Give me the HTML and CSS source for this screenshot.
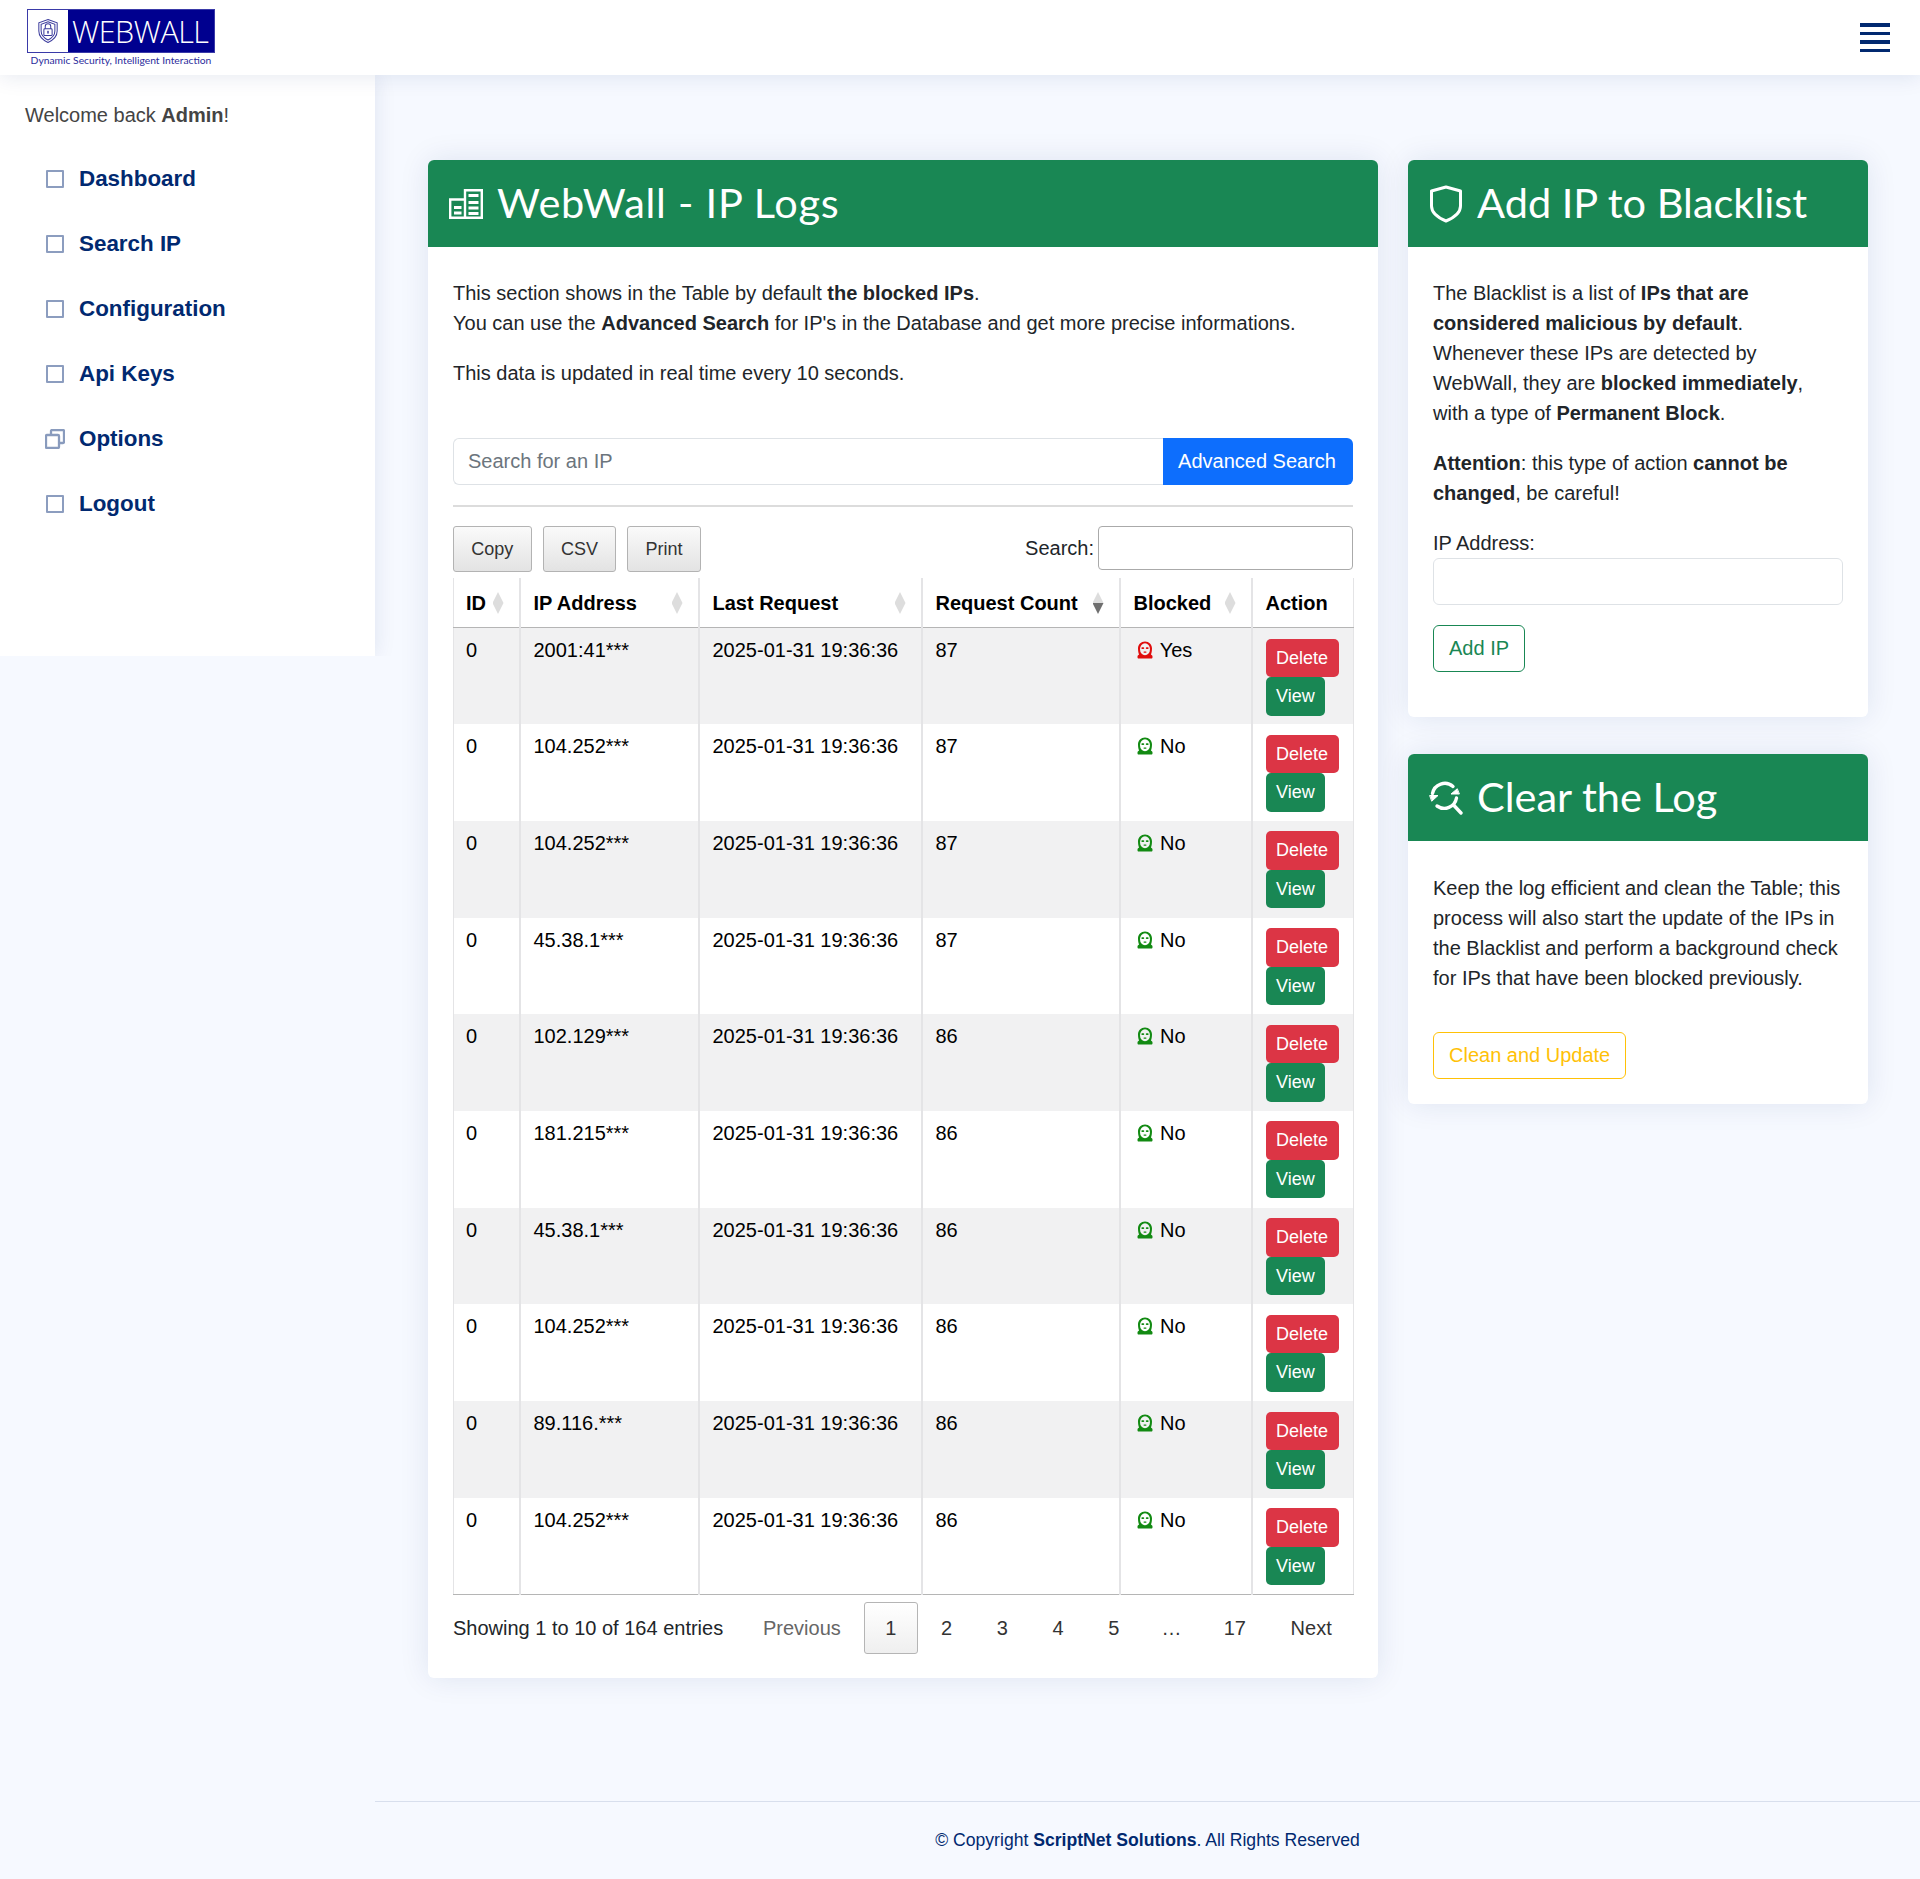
FILE: index.html
```html
<!DOCTYPE html>
<html lang="en">
<head>
    <meta charset="UTF-8">
    <title>WebWall - IP Logs</title>
    <link rel="stylesheet" href="styles.css">
</head>
<body>
    <header class="topbar">
        <div class="logo">
            <div class="logo-box">
                <div class="logo-mark">
                    <svg viewBox="0 0 24 28" width="22" height="26" fill="none" stroke="#3a3a9c" stroke-width="1.1">
                        <path d="M12 1.5 22 5v9c0 6-4.5 10-10 12.5C6.5 24 2 20 2 14V5z"/>
                        <path d="M12 4 19.5 6.7V14c0 4.7-3.4 7.8-7.5 9.8C7.9 21.8 4.5 18.7 4.5 14V6.7z"/>
                        <rect x="7.5" y="11.5" width="9" height="7.5" rx="1" fill="#fff"/>
                        <path d="M9 11.5V9a3 3 0 0 1 6 0v2.5"/>
                        <rect x="11.2" y="13.8" width="1.6" height="3" fill="#3a3a9c" stroke="none"/>
                    </svg>
                </div>
                <span class="logo-name">WEBWALL</span>
            </div>
            <div class="logo-tag">Dynamic Security, Intelligent Interaction</div>
        </div>
        <div class="menu-toggle">
            <span></span><span></span><span></span><span></span>
        </div>
    </header>

    <div class="layout">
        <aside class="sidebar">
            <p class="welcome">Welcome back <b>Admin</b>!</p>
            <ul class="side-nav">
                <li><span class="nav-icon"></span><a href="#">Dashboard</a></li>
                <li><span class="nav-icon"></span><a href="#">Search IP</a></li>
                <li><span class="nav-icon"></span><a href="#">Configuration</a></li>
                <li><span class="nav-icon"></span><a href="#">Api Keys</a></li>
                <li>
                    <svg class="nav-svg" viewBox="0 0 20 20" fill="none" stroke="#899bbd" stroke-width="2.3">
                        <rect x="1" y="6" width="13" height="13" rx="1"/>
                        <path d="M6 6V2a1 1 0 0 1 1-1h11a1 1 0 0 1 1 1v11a1 1 0 0 1-1 1h-4"/>
                    </svg>
                    <a href="#">Options</a>
                </li>
                <li><span class="nav-icon"></span><a href="#">Logout</a></li>
            </ul>
        </aside>

        <main class="main">
            <div class="columns">
                <section class="card">
                    <div class="card-head">
                        <svg class="head-icon" viewBox="0 0 34 30" fill="none" stroke="#fff" stroke-width="2.4">
                            <path d="M1.2 28.8V10.5H16V28.8zM16 28.8V1.2H32.8V28.8z"/>
                            <path d="M5 18.5H12.5M5 24H12.5M19.5 6.5H29.5M19.5 13.5H29.5M19.5 19H29.5M19.5 24.5H29.5" stroke-width="3"/>
                        </svg>
                        <h1 class="title-wide">WebWall - IP Logs</h1>
                    </div>
                    <div class="card-body">
                        <p>This section shows in the Table by default <b>the blocked IPs</b>.<br>You can use the <b>Advanced Search</b> for IP's in the Database and get more precise informations.</p>
                        <p>This data is updated in real time every 10 seconds.</p>

                        <div class="ip-search">
                            <input type="text" placeholder="Search for an IP">
                            <button>Advanced Search</button>
                        </div>
                        <hr class="divider">

                        <div class="table-tools">
                            <div class="export-btns">
                                <button>Copy</button>
                                <button>CSV</button>
                                <button>Print</button>
                            </div>
                            <label class="table-filter">Search: <input type="text"></label>
                        </div>

                        <table class="log-table">
                            <colgroup>
                                <col class="col-id"><col class="col-ip"><col class="col-last"><col class="col-count"><col class="col-blocked"><col class="col-action">
                            </colgroup>
                            <thead>
                                <tr>
                                    <th class="sort">ID</th>
                                    <th class="sort">IP Address</th>
                                    <th class="sort">Last Request</th>
                                    <th class="sort sort-desc">Request Count</th>
                                    <th class="sort">Blocked</th>
                                    <th>Action</th>
                                </tr>
                            </thead>
                            <tbody id="logRows"></tbody>
                        </table>

                        <div class="table-foot">
                            <div class="table-info">Showing 1 to 10 of 164 entries</div>
                            <div class="pager">
                                <a class="off" href="#">Previous</a>
                                <a class="current" href="#">1</a>
                                <a href="#">2</a>
                                <a href="#">3</a>
                                <a href="#">4</a>
                                <a href="#">5</a>
                                <span>…</span>
                                <a href="#">17</a>
                                <a href="#">Next</a>
                            </div>
                        </div>
                    </div>
                </section>

                <div class="side-cards">
                    <section class="card">
                        <div class="card-head">
                            <svg class="head-icon" viewBox="0 0 34 38" fill="none" stroke="#fff" stroke-width="3" stroke-linejoin="round">
                                <path d="M17 2 31.5 6V21c0 7-6 11.500-14.500 15C8.500 32.500 2.500 28 2.500 21V6z"/>
                            </svg>
                            <h1>Add IP to Blacklist</h1>
                        </div>
                        <div class="card-body">
                            <p>The Blacklist is a list of <b>IPs that are considered malicious by default</b>.<br>Whenever these IPs are detected by WebWall, they are <b>blocked immediately</b>, with a type of <b>Permanent Block</b>.</p>
                            <p><b>Attention</b>: this type of action <b>cannot be changed</b>, be careful!</p>
                            <label class="field-label">IP Address:</label>
                            <input class="field" type="text">
                            <button class="btn-outline green">Add IP</button>
                        </div>
                    </section>

                    <section class="card">
                        <div class="card-head">
                            <svg class="head-icon" viewBox="0 0 34 34" fill="none" stroke="#fff" stroke-width="3.4" stroke-linecap="round">
                                <path d="M3.5 12.5A12.5 12.5 0 0 1 24 5.5"/>
                                <path d="M27.5 17A12.5 12.5 0 0 1 8 25"/>
                                <path d="M25 24.5 32 32"/>
                                <path d="M1 14.5H9L3 20zM30 13H22L28 8z" fill="#fff" stroke-width="1" stroke-linejoin="round"/>
                            </svg>
                            <h1>Clear the Log</h1>
                        </div>
                        <div class="card-body">
                            <p class="clear-text">Keep the log efficient and clean the Table; this process will also start the update of the IPs in the Blacklist and perform a background check for IPs that have been blocked previously.</p>
                            <button class="btn-outline yellow">Clean and Update</button>
                        </div>
                    </section>
                </div>
            </div>

            <footer class="footer">© Copyright <b>ScriptNet Solutions</b>. All Rights Reserved</footer>
        </main>
    </div>

    <script>
        const logs = [
            ["2001:41***", 87, true],
            ["104.252***", 87, false],
            ["104.252***", 87, false],
            ["45.38.1***", 87, false],
            ["102.129***", 86, false],
            ["181.215***", 86, false],
            ["45.38.1***", 86, false],
            ["104.252***", 86, false],
            ["89.116.***", 86, false],
            ["104.252***", 86, false]
        ];

        const face = `<svg class="face" viewBox="0 0 16 18">
            <path fill-rule="evenodd" d="M8 .5C12 .5 15 3.5 15 7.5c0 2.5-.5 4.500-1 6 .5.5 1.500 1 1.500 2v1c0 .5-.5 1-1 1h-13c-.5 0-1-.5-1-1v-1c0-1 1-1.500 1.500-2-.5-1.500-1-3.500-1-6C1 3.500 4 .5 8 .5zM8 2.200a5 6 0 1 0 0 12 5 6 0 1 0 0-12z"/>
            <rect x="4.400" y="6.200" width="2.800" height="1.900" rx=".8"/><rect x="8.800" y="6.200" width="2.800" height="1.900" rx=".8"/><rect x="6.500" y="10.500" width="3" height="1.200" rx=".6"/>
        </svg>`;

        document.getElementById("logRows").innerHTML = logs.map(row => `
            <tr>
                <td>0</td>
                <td>${row[0]}</td>
                <td>2025-01-31 19:36:36</td>
                <td>${row[1]}</td>
                <td class="${row[2] ? "is-blocked" : "not-blocked"}">${face} ${row[2] ? "Yes" : "No"}</td>
                <td class="actions"><a class="btn-del" href="#">Delete</a><a class="btn-view" href="#">View</a></td>
            </tr>`).join("");
    </script>
</body>
</html>
```

FILE: styles.css
```css
/* General */
* {
    box-sizing: border-box;
}

body {
    margin: 0;
    font-family: "Liberation Sans", Arial, sans-serif;
    font-size: 20px;
    line-height: 30px;
    color: #212529;
    background: #f6f9ff;
}

p {
    margin: 0 0 20px;
}

input, button {
    font-family: inherit;
}

/* Top bar */
.topbar {
    position: relative;
    z-index: 3;
    height: 75px;
    background: #fff;
    box-shadow: 0 2px 20px rgba(1, 41, 112, 0.1);
    display: flex;
    justify-content: space-between;
    align-items: center;
    padding: 0 30px 0 27px;
}

.logo {
    width: 188px;
    margin-top: 1px;
}

.logo-box {
    height: 44px;
    background: #00008f;
    border: 1px solid #3a3aa8;
    display: flex;
    align-items: center;
}

.logo-mark {
    width: 40px;
    height: 42px;
    background: #fff;
    display: flex;
    align-items: center;
    justify-content: center;
}

.logo-name {
    font-family: "Open Sans", sans-serif;
    font-weight: 300;
    font-size: 30.5px;
    line-height: 42px;
    color: #fff;
    margin-left: 4px;
    letter-spacing: -0.5px;
}

.logo-tag {
    font-family: "Lato", sans-serif;
    font-size: 10.3px;
    line-height: 14px;
    color: #2c2c9c;
    text-align: center;
    white-space: nowrap;
}

.menu-toggle {
    width: 30px;
    display: flex;
    flex-direction: column;
    gap: 5px;
}

.menu-toggle span {
    height: 3.5px;
    background: #012970;
}

/* Layout */
.layout {
    display: flex;
    align-items: flex-start;
}

.sidebar {
    width: 375px;
    height: 581px;
    flex-shrink: 0;
    background: #fff;
    box-shadow: 0 0 20px rgba(1, 41, 112, 0.1);
    clip-path: inset(0 -40px 0 0);
    padding: 25px 25px 0;
}

.welcome {
    color: #444;
    margin: 0 0 16.5px;
}

.side-nav {
    list-style: none;
    margin: 0;
    padding: 0 0 0 21px;
}

.side-nav li {
    display: flex;
    align-items: center;
    height: 65px;
}

.side-nav a {
    text-decoration: none;
    color: #012970;
    font-weight: bold;
    font-size: 22.4px;
    margin-left: 15px;
}

.nav-icon {
    width: 18px;
    height: 18px;
    border: 2.5px solid #8c9dbf;
    border-radius: 1px;
}

.nav-svg {
    width: 20px;
    height: 20px;
    margin: 0 -1px;
}

.main {
    flex: 1;
    padding-top: 85px;
}

.columns {
    display: grid;
    grid-template-columns: 950px 460px;
    gap: 30px;
    padding-left: 53px;
    align-items: start;
    height: 1641px;
}

.side-cards {
    display: flex;
    flex-direction: column;
    gap: 37px;
}

/* Cards */
.card {
    background: #fff;
    border-radius: 6px;
    box-shadow: 0 0 30px rgba(1, 41, 112, 0.1);
    overflow: hidden;
}

.card-head {
    height: 87px;
    background: #198754;
    color: #fff;
    display: flex;
    align-items: center;
    padding-left: 21px;
}

.card-head h1 {
    margin: 0 0 4px 14px;
    font-family: "Lato", sans-serif;
    font-weight: 400;
    font-size: 41.5px;
    line-height: 48px;
}

.card-head .title-wide {
    letter-spacing: 0.75px;
}

.head-icon {
    width: 34px;
    height: 38px;
}

.card-body {
    padding: 31px 25px 24px;
}

/* Search bar */
.ip-search {
    display: flex;
    height: 47px;
    margin-top: 50px;
}

.ip-search input {
    flex: 1;
    border: 1px solid #dee2e6;
    border-right: none;
    border-radius: 6px 0 0 6px;
    padding: 0 14px;
    font-size: 20px;
}

.ip-search input::placeholder {
    color: #6c757d;
}

.ip-search button {
    width: 190px;
    border: none;
    border-radius: 0 6px 6px 0;
    padding: 0 2px 0 0;
    background: #0d6efd;
    color: #fff;
    font-size: 20px;
}

.divider {
    border: none;
    border-top: 2px solid #dcdcdc;
    margin: 20px 0 19px;
}

/* Table tools */
.table-tools {
    display: flex;
    justify-content: space-between;
    height: 52px;
}

.export-btns {
    display: flex;
    gap: 11px;
}

.export-btns button {
    height: 46px;
    padding: 0 17.3px;
    font-size: 18px;
    color: #333;
    border: 1px solid #b3b3b3;
    border-radius: 3px;
    background: linear-gradient(to bottom, #fafafa, #e3e3e3);
}

.table-filter {
    display: flex;
    gap: 4px;
    height: 44px;
    align-items: center;
}

.table-filter input {
    width: 255px;
    height: 44px;
    border: 1px solid #aaa;
    border-radius: 4px;
}

/* Log table */
.log-table {
    width: 900px;
    border-collapse: collapse;
    table-layout: fixed;
    color: #000;
}

.col-id { width: 66px; }
.col-ip { width: 179px; }
.col-last { width: 223px; }
.col-count { width: 198px; }
.col-blocked { width: 132px; }
.col-action { width: 102px; }

.log-table th {
    height: 49.5px;
    text-align: left;
    padding: 0 13px;
    border-left: 2px solid #e4e4e6;
    border-right: 2px solid #e4e4e6;
    border-bottom: 1px solid #b5b5b5;
}

.log-table th:first-child,
.log-table td:first-child {
    border-left: 1px solid #e4e4e6;
    padding-left: 12px;
}

.log-table th:last-child,
.log-table td:last-child {
    border-right: 1px solid #e4e4e6;
}

.log-table th.sort {
    position: relative;
}

.log-table th.sort::after {
    content: "";
    position: absolute;
    right: 15px;
    top: 14px;
    width: 11px;
    height: 22px;
    background: #ddd;
    clip-path: polygon(50% 0, 100% 50%, 50% 100%, 0 50%);
}

.log-table th.sort-desc::after {
    background: linear-gradient(to bottom, #ddd 50%, #6f6f6f 50%);
}

.log-table td {
    height: 96.7px;
    vertical-align: top;
    padding: 7px 13px 0;
    border-left: 2px solid #e4e4e6;
    border-right: 2px solid #e4e4e6;
}

.log-table tbody tr:nth-child(odd) td {
    background: #f1f1f2;
}

.log-table tbody tr:last-child td {
    border-bottom: 1px solid #b5b5b5;
}

.face {
    width: 16px;
    height: 18px;
    margin: 0 2px 0 3px;
    vertical-align: -2px;
}

.is-blocked .face { fill: #e00d0d; }
.not-blocked .face { fill: #128a12; }

.actions a {
    display: block;
    width: fit-content;
    height: 38.5px;
    padding: 0 10.5px;
    font-size: 18px;
    line-height: 38px;
    color: #fff;
    text-decoration: none;
    border-radius: 5px;
}

.actions .btn-del {
    background: #dc3545;
    margin-top: 3.5px;
}

.actions .btn-view {
    background: #198754;
}

/* Pagination */
.table-foot {
    display: flex;
    justify-content: space-between;
    align-items: center;
    margin-top: 7px;
}

.pager {
    display: flex;
    align-items: center;
}

.pager a, .pager span {
    height: 52px;
    line-height: 50px;
    padding: 0 20.3px;
    margin-left: 2px;
    border: 1px solid transparent;
    color: #333;
    text-decoration: none;
}

.pager span {
    padding: 0 17.9px;
}

.pager .off {
    color: #666;
}

.pager .current {
    border: 1px solid #b5b5b5;
    border-radius: 3px;
    background: linear-gradient(to bottom, #fff, #efefef);
}

/* Right column */
.field-label {
    display: block;
}

.field {
    display: block;
    width: 100%;
    height: 47px;
    border: 1px solid #dee2e6;
    border-radius: 6px;
}

.btn-outline {
    display: block;
    height: 47px;
    padding: 0 15px;
    background: #fff;
    border-radius: 6px;
    font-size: 20px;
}

.btn-outline.green {
    margin: 20px 0 21px;
    border: 1px solid #198754;
    color: #198754;
}

.btn-outline.yellow {
    margin-top: 39px;
    margin-bottom: 1px;
    border: 1px solid #ffc107;
    color: #ffc107;
}

.clear-text {
    margin: 1px 0 0;
}

/* Footer */
.footer {
    border-top: 1px solid #d8dfed;
    height: 78px;
    padding-top: 23px;
    text-align: center;
    font-size: 17.6px;
    color: #012970;
}
```
